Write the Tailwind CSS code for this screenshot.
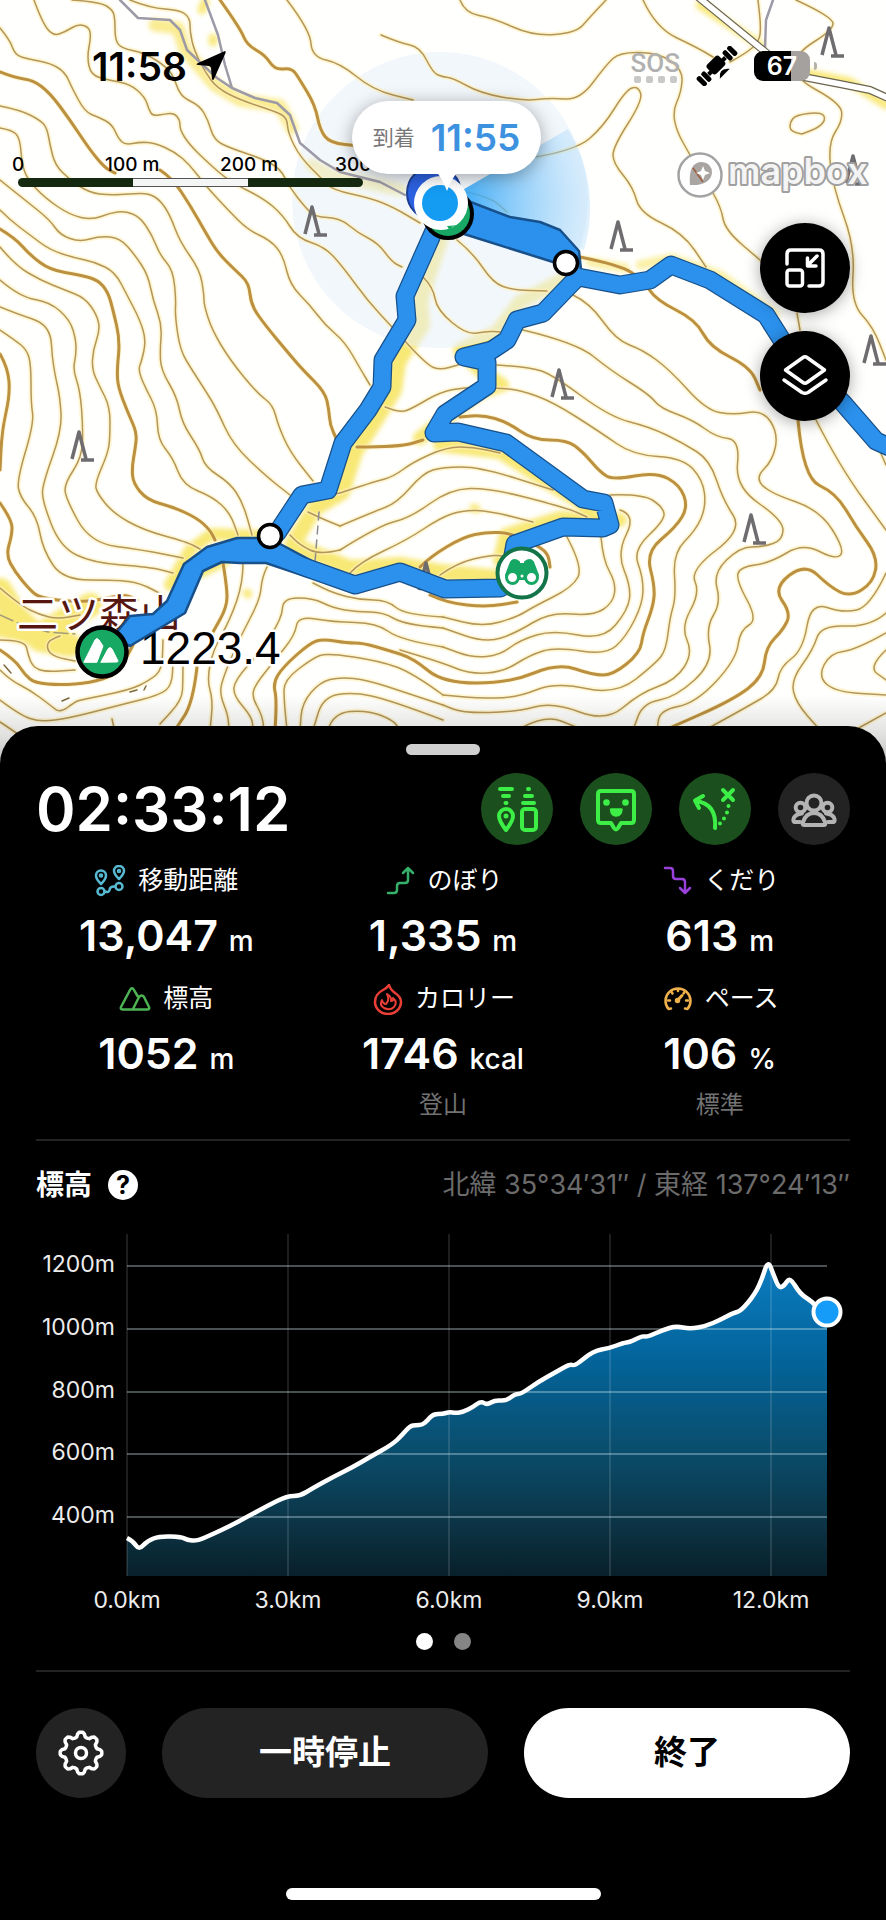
<!DOCTYPE html>
<html lang="ja">

<head>
    <meta charset="UTF-8">
    <meta name="viewport" content="width=device-width, initial-scale=1.0">
    <title>活動中</title>
    <script src="https://cdn.jsdelivr.net/npm/@tailwindcss/browser@4"></script>
</head>

<body class="min-h-screen bg-black font-['Inter','Noto_Sans_CJK_JP',sans-serif] text-white">
    <section class="relative h-[726px] bg-white">
        <svg id="map" class="absolute inset-x-0 top-0 w-full h-[780px]" viewBox="0 0 886 780" preserveAspectRatio="xMidYMin slice" fill="none" stroke-linecap="round" stroke-linejoin="round">
            <defs>
                <filter id="soft" x="-10%" y="-10%" width="120%" height="120%"><feGaussianBlur stdDeviation="2.5" /></filter>
                <radialGradient id="heading" gradientUnits="userSpaceOnUse" cx="440" cy="203" r="150">
                    <stop offset="0.2" stop-color="#3aaaf8" stop-opacity="0.9" />
                    <stop offset="1" stop-color="#a9d9fb" stop-opacity="0.35" />
                </radialGradient>
                <linearGradient id="sheet-shadow" x1="0" y1="0" x2="0" y2="1">
                    <stop offset="0" stop-color="#000" stop-opacity="0" />
                    <stop offset="0.5" stop-color="#000" stop-opacity="0.12" />
                    <stop offset="1" stop-color="#000" stop-opacity="0.3" />
                </linearGradient>
                <symbol id="tree" viewBox="0 0 26 34" overflow="visible">
                    <path d="M3 30 10 3 17 30M12 31H25" stroke="#6f6c70" stroke-width="3.5" stroke-linecap="butt" />
                </symbol>
                <g id="trails">
                    <path d="M440 222 433 233 405 296 407 320 383 360 382 387 368 410 343 443 328 490 302 495 277 533" />
                    <path d="M262 551 310 569 355 585 400 572 445 589 500 588 520 578" />
                    <path d="M510 572 515 544 563 527 603 528 610 525 604 503 583 499 506 443 458 432 434 433 445 414 487 386 487 362 464 357 492 350 507 340 517 320 543 313 572 283 578 277 620 285 650 280 671 265 710 280 766 315 785 345 843 403 876 441 896 450" />
                </g>
                <g id="trails-wide">
                    <path d="M112 638 130 616 153 614 167 601 184 564 207 547 237 538 269 538 312 561 308 577 266 563 240 563 222 562 203 571 185 613 130 646Z" />
                    <path d="M468 201 510 217 540 222 560 230 579 251 581 270 572 272 553 262 464 234Z" />
                </g>
            </defs>

            <rect width="886" height="780" fill="#fffffe" />

            <!-- vegetation tint along the trails -->
            <g stroke="#f6e047" stroke-opacity="0.75" filter="url(#soft)">
                <path stroke-width="16" d="M440 240 420 300 422 325 398 362 394 390 378 416 355 452 342 492 315 508 292 545 350 568 400 565 440 572 500 578" />
                <path stroke-width="14" d="M572 275 520 302 497 332 460 350 480 370 502 385 480 392 420 438 M440 445 500 452 560 490 590 508 M500 560 506 535 560 518 620 520" />
                <path stroke-width="13" d="M155 25 178 28 185 50 215 85 240 100 280 106 292 128 M312 165 330 175 400 190" stroke-opacity="0.6" />
                <path stroke-width="12" d="M170 585 190 550 212 534 260 536 M200 572 225 560" />
                <path stroke-width="24" d="M0 590 15 615 40 640 70 645 M0 625 40 635 90 605" />
                <path stroke-width="9" d="M700 5 760 45 M800 72 850 82 886 105 M205 2 202 10 M213 38V42 M247 593 248 594 M474 508 476 509" stroke-opacity="0.7" />
                <path stroke-width="9" d="M640 265 672 258 720 275 775 315 M590 262 625 268" stroke-opacity="0.5" />
            </g>

            <circle cx="440" cy="200" r="148" fill="#e7f0fa" fill-opacity="0.55" />

            <g id="contour-halo" stroke="#fff0b8" stroke-opacity="0.6" stroke-width="5"></g>
            <g id="contours" stroke="#b3965a" stroke-width="1.5"></g>
            <g id="index-contours" stroke="#bb9040" stroke-width="3"></g>

            <path d="M440 203 568 129 A150 150 0 0 1 584 250Z" fill="url(#heading)" />

            <!-- roads -->
            <path d="M120 0 138 18 170 20 180 30 187 50 205 67 217 78 232 88 255 98 277 103 290 115 300 143 320 160 340 172 380 182 405 195M205 0 218 35 225 65 232 88M773 0 766 20 765 48" stroke="#9d9aa8" stroke-width="2.5" />
            <path d="M698 -3 763 50 793 75 840 84 870 90 890 99" stroke="#6b6552" stroke-width="8" />
            <path d="M698 -3 763 50 793 75 840 84 870 90 890 99" stroke="#fff" stroke-width="5.5" />
            <path d="M319 512 315 562" stroke="#8b8b8f" stroke-width="1.5" stroke-dasharray="8 6" />
            <path d="M0 615 20 624 48 632 75 634" stroke="#a39d7c" stroke-width="1.5" stroke-dasharray="14 5" />
            <path d="M4 665 11 673M62 701 69 698M130 692 137 690M144 690 146 686" stroke="#7d6a3a" stroke-width="1.5" />

            <use href="#tree" x="302" y="204" width="26" height="34" />
            <use href="#tree" x="608" y="219" width="26" height="34" />
            <use href="#tree" x="819" y="25" width="26" height="34" />
            <use href="#tree" x="843" y="153" width="26" height="34" />
            <use href="#tree" x="861" y="333" width="26" height="34" />
            <use href="#tree" x="69" y="429" width="26" height="34" />
            <use href="#tree" x="549" y="367" width="26" height="34" />
            <use href="#tree" x="741" y="512" width="26" height="34" />
            <use href="#tree" x="416" y="560" width="26" height="34" />

            <g stroke="#fff" stroke-width="5" paint-order="stroke">
                <text x="17" y="629" font-size="41" font-family="Noto Sans CJK JP" fill="#561711">二ツ森山</text>
                <text x="140" y="664" font-size="46" font-family="Liberation Sans" fill="#000">1223.4</text>
            </g>

            <use href="#trails" stroke="#17508a" stroke-width="19" />
            <use href="#trails-wide" stroke="#17508a" stroke-width="2.5" fill="#2b91ec" />
            <use href="#trails" stroke="#2b91ec" stroke-width="16.5" />

            <circle cx="270" cy="536" r="11.5" fill="#fff" stroke="#000" stroke-width="3.5" />
            <circle cx="566" cy="263" r="11.5" fill="#fff" stroke="#000" stroke-width="3.5" />

            <!-- summit -->
            <circle cx="102" cy="652" r="24.5" fill="#17a964" stroke="#000" stroke-width="4.5" />
            <path d="M84 662 95 640Q97 637 99 640L103 646 97 662ZM101 662 108 649Q110 646 112 649L118 661Q118 662 117 662Z" fill="#fff" stroke="#fff" stroke-width="1" />

            <!-- viewpoint -->
            <circle cx="522" cy="573" r="24.5" fill="#fff" stroke="#13744a" stroke-width="4" />
            <path d="M506 575 511 562Q514 558 519 562V564H525V562Q530 558 533 562L538 575 530 572 524 579H520L514 572Z" fill="#16a765" stroke="#16a765" stroke-width="2" />
            <circle cx="512.500" cy="577.500" r="6" fill="#fff" stroke="#16a765" stroke-width="3" />
            <circle cx="531.500" cy="577.500" r="6" fill="#fff" stroke="#16a765" stroke-width="3" />
            <circle cx="522" cy="576" r="1.500" fill="#fff" />

            <!-- current position -->
            <circle cx="434" cy="193" r="27" fill="#2c62e2" stroke="#1c3f94" stroke-width="2" />
            <circle cx="448" cy="214" r="24" fill="#17a964" stroke="#000" stroke-width="4" />
            <circle cx="441" cy="203" r="27" fill="#fff" />
            <path d="M447 226 450 231 453 226 456 231 460 225" fill="#17a964" />
            <circle cx="440" cy="203" r="18" fill="#149cf3" />

            <rect y="695" width="886" height="80" fill="url(#sheet-shadow)" />
        </svg>

        <!-- status bar -->
        <header class="relative flex h-[132px] items-center justify-between pl-[92px] pr-[69px] text-black">
            <div class="flex items-center gap-2">
                <time class="text-[39px] font-semibold leading-none">11:58</time>
                <svg class="size-8" viewBox="0 0 32 32"><path d="M30 1 Q31 1 30.500 3 L19 29 Q18 31 17 29 L16 18 Q15.500 16.500 14 16 L3 15 Q0 14.500 3 13Z" /></svg>
            </div>
            <div class="flex items-center gap-4">
                <div class="flex flex-col items-center text-[#b1b1b1]">
                    <span class="font-['Roboto'] text-[26px] font-medium leading-[26px]">SOS</span>
                    <span class="flex gap-[5px]">
                        <i class="size-[7px] rounded-xs bg-[#c8c8c8]"></i>
                        <i class="size-[7px] rounded-xs bg-[#c8c8c8]"></i>
                        <i class="size-[7px] rounded-xs bg-[#c8c8c8]"></i>
                        <i class="size-[7px] rounded-xs bg-[#c8c8c8]"></i>
                    </span>
                </div>
                <svg class="h-10 w-[42px]" viewBox="0 0 42 40">
                    <g transform="rotate(-45 21 20)">
                        <rect x="-3" y="14" width="5" height="12" rx="2" /><rect x="3.500" y="14" width="5" height="12" rx="2" />
                        <rect x="33.500" y="14" width="5" height="12" rx="2" /><rect x="40" y="14" width="5" height="12" rx="2" />
                        <path d="M9 18H33V22H9Z" /><rect x="12.500" y="12" width="17" height="13" rx="3" />
                        <path d="M14 31Q21 22 28 31Z" />
                    </g>
                </svg>
                <div class="flex items-center gap-1">
                    <div class="flex h-[30px] w-14 items-center justify-center rounded-[9px] bg-linear-to-r from-black from-66% to-[#a5a19f] to-66%">
                        <span class="text-[25px] font-semibold leading-none text-white">67</span>
                    </div>
                    <i class="h-2 w-[3px] rounded-r bg-[#b5b1a5]"></i>
                </div>
            </div>
        </header>

        <!-- scale -->
        <div class="absolute left-[18px] top-[154px] w-[345px] text-black">
            <div class="grid grid-cols-3 whitespace-nowrap text-[19px] font-medium leading-[22px]">
                <span class="-ml-[6px]">0</span>
                <span class="-ml-[28px]">100 m</span>
                <span class="-ml-[28px]">200 m</span>
            </div>
            <span class="absolute left-[317px] top-0 whitespace-nowrap text-[19px] font-medium leading-[22px]">300</span>
            <div class="mt-[2px] flex h-[9px] overflow-hidden rounded-full bg-[#14290f]">
                <i class="flex-1"></i>
                <i class="flex-1 border-y border-[#555] bg-[#f4f5f5]"></i>
                <i class="flex-1"></i>
            </div>
        </div>

        <!-- arrival bubble -->
        <div class="absolute left-[352px] top-[101px] flex h-[73px] w-[189px] items-center justify-center gap-4 rounded-full bg-white shadow-[0_3px_18px_rgba(0,0,0,0.35)]">
            <span class="text-[21px] text-[#777]">到着</span>
            <time class="text-[37px] font-semibold leading-none text-[#3d92e0]">11:55</time>
            <svg class="absolute left-[85px] top-[72px] h-[18px] w-5" viewBox="0 0 20 18" fill="#fff"><path d="M0 0H20Q16 3 10 18 4 3 0 0Z" /></svg>
        </div>

        <a href="#" aria-label="mapbox" class="absolute right-[14px] top-[148px]">
            <svg class="h-[54px] w-[196px]" viewBox="0 0 196 54">
                <circle cx="24" cy="27" r="21.500" fill="#fff" fill-opacity="0.8" stroke="#a3a3a3" stroke-width="2.500" />
                <path d="M14 37Q12 14 26 14 36 15 36 25 34 38 14 37Z" fill="#a9a5a3" />
                <path d="M17 20 27 34" stroke="#9d5d3c" stroke-width="1.500" />
                <path d="M27 18 29 23 34 25 29 27 27 32 25 27 20 25 25 23Z" fill="#fff" />
                <text x="52" y="36" font-size="36" font-weight="600" font-family="Inter" fill="#fff" fill-opacity="0.9" stroke="#a0a0a0" stroke-width="4" stroke-linejoin="round" paint-order="stroke">mapbox</text>
            </svg>
        </a>

        <div class="absolute right-9 top-[223px] flex flex-col gap-[18px]">
            <button aria-label="縮小" class="flex size-[90px] items-center justify-center rounded-full bg-black shadow-[0_2px_16px_rgba(0,0,0,0.35)]">
                <svg class="size-11" viewBox="0 0 44 44" fill="none" stroke="#fff" stroke-width="3.500" stroke-linecap="round" stroke-linejoin="round">
                    <path d="M4 18V8Q4 4 8 4H36Q40 4 40 8V36Q40 40 36 40H26" />
                    <rect x="4" y="24" width="15.500" height="16" rx="2.500" />
                    <path d="M34 10 25 19M24.500 12V20H33" />
                </svg>
            </button>
            <button aria-label="レイヤー" class="flex size-[90px] items-center justify-center rounded-full bg-black shadow-[0_2px_16px_rgba(0,0,0,0.35)]">
                <svg class="size-12" viewBox="0 0 48 48" fill="none" stroke="#fff" stroke-width="3.500" stroke-linecap="round" stroke-linejoin="round">
                    <path d="M22 5.500Q24 4 26 5.500L43.500 18 26 30.500Q24 32 22 30.500L4.500 18Z" />
                    <path d="M3 28 21 40.500Q24 42 27 40.500L45 28" />
                </svg>
            </button>
        </div>
    </section>

    <main class="relative rounded-t-[38px] bg-black pb-[18px] pt-[18px]">
        <div class="mx-auto h-[11px] w-[74px] rounded-full bg-[#d0d0d0]"></div>

        <div class="mt-[18px] flex items-center justify-between px-9">
            <time class="text-[60px] font-semibold leading-[72px]">02:33:12</time>
            <div class="flex gap-[27px] text-[#3dee46]">
                <button aria-label="位置共有" class="flex size-[72px] items-center justify-center rounded-full bg-[#1b4f1d]">
                    <svg class="size-12" viewBox="0 0 48 48" fill="none" stroke="currentColor" stroke-width="4" stroke-linecap="round" stroke-linejoin="round">
                        <path d="M7 4H19M10 11H16M12.500 18H13.500M35 4H36M32 11H39M30 18H41" />
                        <path d="M13 45Q6 36 6 31A7 7 0 0 1 20 31Q20 36 13 45Z" />
                        <circle cx="13" cy="31" r="2.500" fill="currentColor" stroke="none" />
                        <rect x="29" y="24" width="14" height="21" rx="3" />
                    </svg>
                </button>
                <button aria-label="フィールドメモ" class="flex size-[72px] items-center justify-center rounded-full bg-[#1b4f1d]">
                    <svg class="size-12" viewBox="0 0 48 48" fill="none" stroke="currentColor" stroke-width="4" stroke-linecap="round" stroke-linejoin="round">
                        <path d="M9 6H39Q42 6 42 9V35Q42 38 39 38H29L26 43Q24 46 22 43L19 38H9Q6 38 6 35V9Q6 6 9 6Z" />
                        <circle cx="14.500" cy="17.500" r="3.300" fill="currentColor" stroke="none" />
                        <circle cx="33.500" cy="17.500" r="3.300" fill="currentColor" stroke="none" />
                        <path d="M19 24.500H29.500Q29 30.500 24 30.500 19.500 30.500 19 24.500Z" fill="currentColor" stroke-width="2.500" />
                    </svg>
                </button>
                <button aria-label="ルート外れ警告" class="flex size-[72px] items-center justify-center rounded-full bg-[#1b4f1d]">
                    <svg class="size-12" viewBox="0 0 48 48" fill="none" stroke="currentColor" stroke-width="4" stroke-linecap="round" stroke-linejoin="round">
                        <path d="M24 43Q26 19 5 16M12 11 4 15.500 8 23" />
                        <path d="M32 5 42 15M42 5 32 15" />
                        <path d="M37.500 21V21M36 27.500V27.500M33 33.500V33.500M29 38.500V38.500" />
                    </svg>
                </button>
                <button aria-label="メンバー" class="flex size-[72px] items-center justify-center rounded-full bg-[#232323] text-[#b4b4b4]">
                    <svg class="size-12" viewBox="0 0 48 48" fill="none" stroke="currentColor" stroke-width="4" stroke-linecap="round" stroke-linejoin="round">
                        <circle cx="24" cy="18" r="7.500" />
                        <circle cx="10.500" cy="22.500" r="4.800" />
                        <circle cx="37.500" cy="22.500" r="4.800" />
                        <path d="M14 40Q12 40 13 37Q16 28 24 28T35 37Q36 40 34 40Z" />
                        <path d="M10 37H5Q3 37 3.500 34Q5 29 12 28.500M38 37H43Q45 37 44.500 34Q43 29 36 28.500" />
                    </svg>
                </button>
            </div>
        </div>

        <dl class="mt-5 grid grid-cols-3 gap-y-[22px] px-7 text-center">
            <div>
                <dt class="flex h-8 items-center justify-center gap-3 text-[25px]">
                    <svg class="size-8" viewBox="0 0 32 32" fill="none" stroke="#58b9d3" stroke-width="2.500" stroke-linecap="round" stroke-linejoin="round">
                        <path d="M7 19Q2 14 2 10.500A5 5 0 0 1 12 10.500Q12 14 7 19ZM25 14Q20 9 20 6A5 5 0 0 1 30 6Q30 9 25 14Z" />
                        <circle cx="7" cy="10.500" r="1" /><circle cx="25" cy="6" r="1" />
                        <circle cx="7" cy="26.500" r="3.500" /><circle cx="25" cy="21.500" r="3.500" />
                        <path d="M11 26.500Q15 28 15.500 25 16 21 21 21.500" />
                    </svg>
                    移動距離
                </dt>
                <dd class="mt-3 text-[43px] font-semibold leading-[52px]">13,047 <span class="text-[28px] font-medium leading-none">m</span></dd>
            </div>
            <div>
                <dt class="flex h-8 items-center justify-center gap-3 text-[25px]">
                    <svg class="size-8" viewBox="0 0 32 32" fill="none" stroke="#35b06a" stroke-width="2.500" stroke-linecap="round" stroke-linejoin="round">
                        <path d="M5 28H11Q14 28 14 25V21Q14 18 17 18H22Q25 18 25 15V3M20 8 25 3 30 8" />
                    </svg>
                    のぼり
                </dt>
                <dd class="mt-3 text-[43px] font-semibold leading-[52px]">1,335 <span class="text-[28px] font-medium leading-none">m</span></dd>
            </div>
            <div>
                <dt class="flex h-8 items-center justify-center gap-3 text-[25px]">
                    <svg class="size-8" viewBox="0 0 32 32" fill="none" stroke="#9a41dc" stroke-width="2.500" stroke-linecap="round" stroke-linejoin="round">
                        <path d="M5 3H10Q13 3 13 6V11Q13 14 16 14H22Q25 14 25 17V28M20 23 25 28 30 23" />
                    </svg>
                    くだり
                </dt>
                <dd class="mt-3 text-[43px] font-semibold leading-[52px]">613 <span class="text-[28px] font-medium leading-none">m</span></dd>
            </div>
            <div>
                <dt class="flex h-8 items-center justify-center gap-3 text-[25px]">
                    <svg class="size-8" viewBox="0 0 32 32" fill="none" stroke="#4db454" stroke-width="2.500" stroke-linecap="round" stroke-linejoin="round">
                        <path d="M4 26.500Q1 26.500 2 24L11 7Q13 3.500 15 7L18.500 13M4 26.500H28Q31 26.500 30 24L25 14Q23 11 20 14L14 26" />
                    </svg>
                    標高
                </dt>
                <dd class="mt-3 text-[43px] font-semibold leading-[52px]">1052 <span class="text-[28px] font-medium leading-none">m</span></dd>
            </div>
            <div>
                <dt class="flex h-8 items-center justify-center gap-3 text-[25px]">
                    <svg class="size-8" viewBox="0 0 32 32" fill="none" stroke="#ea3f36" stroke-width="2.500" stroke-linecap="round" stroke-linejoin="round">
                        <path d="M18 2Q19 6 24 10 30 14 30 19A13 12 0 0 1 4 19Q4 11 12 7 16 5 18 2Z" />
                        <path d="M16 11Q21 14 20 18 23 18 22 15 27 19 23 24 19 28 13 25 8 22 11 17 12 21 15 21 19 17 16 11Z" stroke-width="2" />
                    </svg>
                    カロリー
                </dt>
                <dd class="mt-3 text-[43px] font-semibold leading-[52px]">1746 <span class="text-[28px] font-medium leading-none">kcal</span></dd>
                <dd class="mt-[10px] text-[24px] leading-8 text-[#727272]">登山</dd>
            </div>
            <div>
                <dt class="flex h-8 items-center justify-center gap-3 text-[25px]">
                    <svg class="size-8" viewBox="0 0 32 32" fill="none" stroke="#eeb14b" stroke-width="2.500" stroke-linecap="round" stroke-linejoin="round">
                        <path d="M10 25.500 7.500 26A12.500 12.500 0 1 1 26.500 26L24 25.500" />
                        <path d="M17 6.500V8M10.500 9 11.500 10.500M23.500 9 22.500 10.500M7 17.500H9M27 17.500H25" />
                        <path d="M16 18 21 12.500" stroke-width="3" />
                        <circle cx="16.500" cy="17.500" r="1.500" fill="#eeb14b" />
                    </svg>
                    ペース
                </dt>
                <dd class="mt-3 text-[43px] font-semibold leading-[52px]">106 <span class="text-[28px] font-medium leading-none">%</span></dd>
                <dd class="mt-[10px] text-[24px] leading-8 text-[#727272]">標準</dd>
            </div>
        </dl>

        <section class="mx-9 mt-[18px] border-y-2 border-[#232323] pb-5 pt-6">
            <div class="flex h-10 items-center justify-between">
                <div class="flex items-center gap-4">
                    <h2 class="text-[28px] font-bold">標高</h2>
                    <button aria-label="ヘルプ" class="flex size-[30px] items-center justify-center rounded-full bg-white text-[25px] font-bold leading-none text-black">?</button>
                </div>
                <p class="text-[27px] text-[#6b6b6b]">北緯 35°34′31″ / 東経 137°24′13″</p>
            </div>

            <svg class="mt-[26px] w-full" viewBox="0 0 814 390" font-family="Inter" font-size="23" fill="#ececec">
                <defs>
                    <linearGradient id="area" gradientUnits="userSpaceOnUse" x1="0" y1="31" x2="0" y2="345">
                        <stop offset="0" stop-color="#0c7cc0" />
                        <stop offset="0.3" stop-color="#03659c" />
                        <stop offset="0.6" stop-color="#0a4d6c" />
                        <stop offset="0.85" stop-color="#0c3243" />
                        <stop offset="1" stop-color="#08202a" />
                    </linearGradient>
                </defs>
                <path id="elevation-area" fill="url(#area)" />
                <path d="M91 3V345M252 3V345M413 3V345M574 3V345M735 3V345" stroke="#fff" stroke-opacity="0.16" stroke-width="1.500" />
                <path d="M91 35H791M91 98H791M91 161H791M91 223H791M91 286H791" stroke="#d8f0f6" stroke-opacity="0.45" stroke-width="1.500" />
                <path id="elevation-line" fill="none" stroke="#fff" stroke-width="4.500" stroke-linejoin="round" />
                <circle cx="791" cy="81" r="13.500" fill="#149cf8" stroke="#fff" stroke-width="4" />
                <g text-anchor="end">
                    <text x="79" y="41">1200m</text>
                    <text x="79" y="104">1000m</text>
                    <text x="79" y="167">800m</text>
                    <text x="79" y="229">600m</text>
                    <text x="79" y="292">400m</text>
                </g>
                <g text-anchor="middle">
                    <text x="91" y="377">0.0km</text>
                    <text x="252" y="377">3.0km</text>
                    <text x="413" y="377">6.0km</text>
                    <text x="574" y="377">9.0km</text>
                    <text x="735" y="377">12.0km</text>
                </g>
            </svg>

            <div class="mt-3 flex justify-center gap-[21px]">
                <i class="size-[17px] rounded-full bg-white"></i>
                <i class="size-[17px] rounded-full bg-[#858585]"></i>
            </div>
        </section>

        <div class="mt-9 flex gap-9 px-9">
            <button aria-label="設定" class="flex size-[90px] shrink-0 items-center justify-center rounded-full bg-[#232323]">
                <svg class="size-12" viewBox="0 0 48 48" fill="none" stroke="#fff" stroke-width="3.500" stroke-linejoin="round">
                    <path id="gear" />
                    <circle cx="24" cy="24" r="5.500" />
                </svg>
            </button>
            <button class="h-[90px] flex-1 rounded-full bg-[#232323] text-[33px] font-bold">一時停止</button>
            <button class="h-[90px] flex-1 rounded-full bg-white text-[33px] font-bold text-black">終了</button>
        </div>

        <div class="mx-auto mt-[90px] h-3 w-[315px] rounded-full bg-white"></div>
    </main>

    <script>
        // map coordinates, one contour per line
        const contours = `
34,0 42,22 53,36 65,32 78,24 89,27 91,37 87,57 91,75 108,80 130,84 145,97 149,110 153,116 165,114 174,113 180,120 180,130 189,144 205,160 230,182 263,198 283,215 297,238 325,247 343,267 367,300 392,327 427,365 440,370 458,365
72,0 100,2 113,10 115,20 115,38 120,48 145,53 168,68 175,80 178,90 184,98 200,106 208,120 214,140 230,148 260,158 280,168 290,188 305,207 315,217 340,218 358,233 378,243 392,262 402,267
130,0 150,8 180,10 190,18 190,32 194,50 205,72 217,88 240,100 277,112 287,118 288,133 300,157 323,180 333,190 370,198 393,207 420,223
0,28 10,40 15,55 28,59 50,63 65,72 72,88 85,112 98,117 112,124 118,138 125,145 140,142 155,143 175,152 190,165 205,185 228,210 248,230 270,240 283,255 290,285 310,305 325,325 345,342 361,370 370,385
0,106 20,110 40,120 47,128 50,145 55,165 70,180 90,193 110,195 130,194 148,193 160,200 170,215 180,242 200,270 204,295 204,305 212,330 230,360 257,393 273,405 278,425 290,452 313,481
0,128 12,130 20,138 22,165 28,180 45,198 70,215 92,220 110,213 125,211 140,217 152,235 160,255 173,270 176,300 175,315 180,350 192,370 207,393 217,410 233,445 267,477 290,495
0,180 25,200 50,220 60,235 80,242 100,236 120,238 135,255 148,275 153,300 162,325 160,350 161,370 177,397 182,423 200,450 205,467 230,483 243,503 252,535
0,210 10,220 30,235 50,250 75,258 95,262 115,272 127,295 140,320 146,340 142,360 138,370 145,387 157,410 158,440 173,458 183,485 213,497 230,513 238,535
0,247 15,265 40,280 65,290 85,298 97,315 100,330 93,350 92,370 100,387 110,407 110,437 108,453 95,483 97,493 113,513 143,530 187,542 200,549
0,280 20,297 50,302 70,320 76,340 76,355 73,370 80,390 83,427 82,457 65,483 65,497 90,543 143,550 183,558
0,307 20,315 42,322 51,335 52,355 55,375 60,397 62,430 43,483 42,500 60,547 93,563 150,567 173,573
0,330 15,340 27,350 31,365 31,403 34,423 17,480 20,497 37,517 43,550 63,580 117,580 140,583 163,595
0,588 20,605 40,615 58,619 80,615
0,640 25,640 28,655 33,667 45,672 75,670
0,670 10,680 30,690 50,705 60,713 75,702 80,700 130,690 150,680 162,670 163,640
0,700 20,715 40,722 70,718 120,705 160,695 172,685 173,660
0,722 20,735 30,745
60,636 48,640 47,650 55,657 75,661
183,660 183,680 182,700 160,724
112,719 114,728
243,563 243,583 230,620 213,650 207,680 213,700 210,730
267,567 262,577 260,600 240,637 222,680 220,695 228,715 229,730
443,617 405,615 387,600 360,600 333,593 313,583
443,628 405,625 383,612 357,612 333,608 313,598 283,598 282,618 260,652 235,680 233,695 252,717 253,730
443,647 400,640 377,623 333,622 298,616 295,635 275,660 255,685 252,697 262,715 264,730
443,695 413,673 380,661 327,653 313,658 284,680 284,700 287,730
443,705 407,693 367,680 340,677 320,682 302,703 300,730
443,720 390,700 353,692 323,697 313,730
328,730 333,713 367,710 393,720 400,730
385,407 400,413 413,408 440,392 467,387 497,388 520,390 553,402 600,432 633,455 683,458 703,480 706,507 696,530 673,553 676,597 670,617 666,650 656,663 616,695 556,682 516,698 476,698 443,695
340,493 373,482 393,477 413,462 447,447 473,447 500,453
340,526 373,512 397,503 423,473 443,467 480,467 553,490
340,550 380,525 410,518 450,489 490,488 567,508 587,517
350,573 360,562 407,540 440,518 463,510 490,511 533,522
340,493 320,497 305,497
340,526 325,520 308,512
340,550 320,555 300,545 290,535
440,575 457,563 490,555 503,556
567,537 583,567 573,587 533,607 517,617 483,627 443,617
601,537 603,560 616,583 613,603 593,616 550,612 516,633 486,643 443,628
610,495 643,494 663,507 665,520 633,550 643,577 643,603 626,637 606,655 556,647 530,655 503,672 470,674 443,663 400,650
620,510 636,515 617,553 631,587 628,610 603,640 553,630 520,640 500,655 473,658 443,647
460,0 465,13 493,18 533,36 576,33 590,17 606,0
287,0 310,30 312,57 340,63 373,90 413,100
381,35 400,43 420,47 433,73 443,77 453,78 480,93 523,101 550,98 580,100 606,65 620,52 660,53 683,70 681,93 673,110 676,130 690,155
713,193 721,207 725,230 760,260
797,313 800,330
643,0 656,28 696,47 713,57
730,62 745,54 759,42 761,27 758,0
796,0 833,17 833,30 796,53 793,77 840,103 843,120 828,143 833,187 855,247 851,303 873,327 886,360
802,134 790,132 790,122 796,115 820,112 826,118 820,127 802,134
536,157 576,150 603,127 626,90 638,86 643,100 613,147 613,163 633,187 640,213 683,233 706,267
466,192 490,197 507,212
573,295 590,303 616,340 643,350 670,370 706,410 733,415 763,410 778,433 773,460 755,478 770,493 820,510 845,550 836,560 803,543 770,563 740,567 736,580 758,620 740,630 736,660 696,703 660,710 657,730
523,330 577,343 610,370 650,395 660,408 693,420 716,437 740,440 735,487 783,520 783,540 763,547 740,547 713,573 721,603 706,627 713,663 676,697 643,703 633,730
497,365 530,367 553,375 610,417 650,427 683,443 710,460 723,500 743,530 690,570 700,593 681,627 693,653 676,680 640,693 606,722 553,702 516,712 463,713 443,705
816,420 840,467 886,530
875,440 886,465
886,573 870,607 843,613 811,602 803,650 780,667 776,690 745,708 705,730
886,613 870,627 821,625 813,650 791,680 796,703 820,730
886,633 856,650 830,653 818,677 836,692 886,695
886,650 868,667 886,680
855,730 886,713
523,727 546,715 576,727
457,240 473,253 493,283 513,290 547,291
423,277 433,287 437,310 467,335 487,331 500,332`;

        const indexContours = `
0,72 15,78 33,80 50,93 70,120 90,150 105,168 115,173
160,170 172,178 190,205 207,235 218,253 235,270 249,283 251,305 265,325 290,355 303,370 325,392 329,410 330,425 337,440
0,229 15,238 30,255 50,270 80,275 98,280 108,292 113,310 120,340 117,370 118,387 128,413 137,433 135,450 132,467 133,483 147,500 173,507 197,518 210,530 215,540
223,563 227,587 227,607 213,632
197,667 193,703 175,730
0,354 8,368 10,395 2,430 0,470
0,503 12,520 12,535 6,555 15,572 30,590 40,598 75,602 100,600 125,594 137,600
0,650 15,660 25,675 35,683 60,685 90,683 115,675 125,660 133,645
275,730 277,700 273,683 283,667 310,643 323,639 347,643 363,643 387,650 413,658 443,683 510,683 558,663 593,675 613,675 640,653 643,633 653,607 655,587 646,552 676,527 688,507 680,485 656,472 613,480 600,472 583,452 567,440 533,440 507,422 483,415 460,417
357,447 400,447 423,440
420,567 430,557 463,537 487,532 510,533 533,543 548,553 550,567
430,595 447,603 487,607 517,602
220,0 240,28 247,45 265,55 275,70 292,68 300,80 315,105 320,130 330,143 360,146
580,257 620,265 643,280 656,300 696,320 710,347 750,367 760,390
798,420 803,478 836,493 856,527 878,557 873,583 850,597 830,587 805,563 773,588 791,613 783,630 766,647 763,677 733,700 665,730`;

        const elevation = '91,307 97,310 103,319 111,310 124,305 146,306 151,309 161,310 177,303 194,295 211,286 231,275 251,265 264,265 277,257 297,246 317,236 334,226 357,213 366,204 374,195 380,194 386,194 391,190 397,183 407,183 413,181 420,182 427,181 437,176 445,170 451,174 459,169 470,170 479,163 485,163 502,151 520,141 534,133 539,135 557,120 574,117 587,112 594,111 600,108 607,105 611,106 627,99 640,95 654,98 670,95 684,89 697,82 705,80 719,63 726,48 732,29 738,45 743,57 748,55 754,46 764,63 777,71 783,80 791,81';

        const parse = line => line.split(' ').map(pair => pair.split(',').map(Number));

        // quadratic curve through the midpoints of the given points
        function smooth(points) {
            let d = `M${points[0]}`;
            for (let i = 1; i < points.length - 1; i++) {
                const [x, y] = points[i];
                const [nx, ny] = points[i + 1];
                d += `Q${x} ${y} ${(x + nx) / 2} ${(y + ny) / 2}`;
            }
            return d + `L${points[points.length - 1]}`;
        }

        function drawLines(id, lines) {
            const group = document.getElementById(id);
            lines.trim().split('\n').forEach(line => {
                const path = document.createElementNS('http://www.w3.org/2000/svg', 'path');
                path.setAttribute('d', smooth(parse(line)));
                group.appendChild(path);
            });
        }

        drawLines('contour-halo', contours + indexContours);
        drawLines('contours', contours);
        drawLines('index-contours', indexContours);

        const profile = smooth(parse(elevation));
        document.getElementById('elevation-line').setAttribute('d', profile);
        document.getElementById('elevation-area').setAttribute('d', profile + 'V345H91Z');

        // eight-toothed gear outline
        let gear = '';
        for (let a = 0; a <= 360; a += 5) {
            const r = 18.5 + 2.4 * Math.tanh(2.2 * Math.cos(a * 8 * Math.PI / 180));
            const t = a * Math.PI / 180;
            gear += `${gear ? 'L' : 'M'}${(24 + r * Math.sin(t)).toFixed(2)} ${(24 - r * Math.cos(t)).toFixed(2)}`;
        }
        document.getElementById('gear').setAttribute('d', gear + 'Z');
    </script>
</body>

</html>
